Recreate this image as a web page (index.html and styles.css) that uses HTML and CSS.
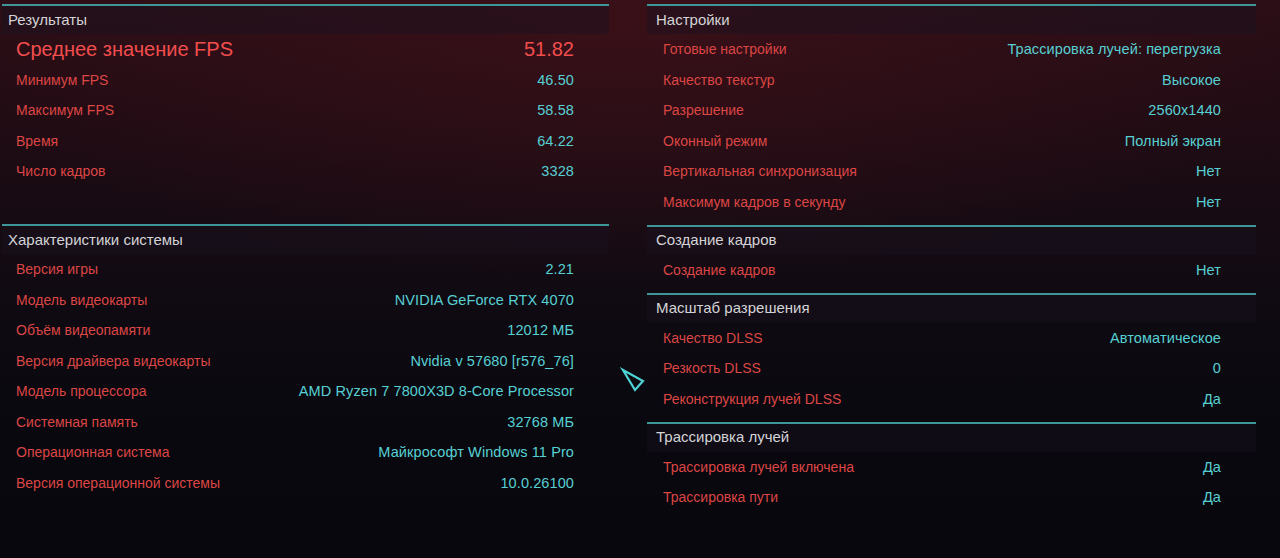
FILE: index.html
```html
<!DOCTYPE html>
<html lang="ru">
<head>
<meta charset="utf-8">
<title>Результаты теста</title>
<link rel="stylesheet" href="styles.css">
</head>
<body>
<main class="screen">
  <div class="col col-left">
    <section class="sec sec-results">
      <div class="sec-head">Результаты</div>
      <div class="row row-big"><span class="lbl">Среднее значение FPS</span><span class="val">51.82</span></div>
      <div class="row"><span class="lbl">Минимум FPS</span><span class="val">46.50</span></div>
      <div class="row"><span class="lbl">Максимум FPS</span><span class="val">58.58</span></div>
      <div class="row"><span class="lbl">Время</span><span class="val">64.22</span></div>
      <div class="row"><span class="lbl">Число кадров</span><span class="val">3328</span></div>
    </section>
    <section class="sec">
      <div class="sec-head">Характеристики системы</div>
      <div class="row"><span class="lbl">Версия игры</span><span class="val">2.21</span></div>
      <div class="row"><span class="lbl">Модель видеокарты</span><span class="val">NVIDIA GeForce RTX 4070</span></div>
      <div class="row"><span class="lbl">Объём видеопамяти</span><span class="val">12012 МБ</span></div>
      <div class="row"><span class="lbl">Версия драйвера видеокарты</span><span class="val">Nvidia v 57680 [r576_76]</span></div>
      <div class="row"><span class="lbl">Модель процессора</span><span class="val">AMD Ryzen 7 7800X3D 8-Core Processor</span></div>
      <div class="row"><span class="lbl">Системная память</span><span class="val">32768 МБ</span></div>
      <div class="row"><span class="lbl">Операционная система</span><span class="val">Майкрософт Windows 11 Pro</span></div>
      <div class="row"><span class="lbl">Версия операционной системы</span><span class="val">10.0.26100</span></div>
    </section>
  </div>

  <div class="col col-right">
    <section class="sec">
      <div class="sec-head">Настройки</div>
      <div class="row"><span class="lbl">Готовые настройки</span><span class="val">Трассировка лучей: перегрузка</span></div>
      <div class="row"><span class="lbl">Качество текстур</span><span class="val">Высокое</span></div>
      <div class="row"><span class="lbl">Разрешение</span><span class="val">2560x1440</span></div>
      <div class="row"><span class="lbl">Оконный режим</span><span class="val">Полный экран</span></div>
      <div class="row"><span class="lbl">Вертикальная синхронизация</span><span class="val">Нет</span></div>
      <div class="row"><span class="lbl">Максимум кадров в секунду</span><span class="val">Нет</span></div>
    </section>
    <section class="sec">
      <div class="sec-head">Создание кадров</div>
      <div class="row"><span class="lbl">Создание кадров</span><span class="val">Нет</span></div>
    </section>
    <section class="sec">
      <div class="sec-head">Масштаб разрешения</div>
      <div class="row"><span class="lbl">Качество DLSS</span><span class="val">Автоматическое</span></div>
      <div class="row"><span class="lbl">Резкость DLSS</span><span class="val">0</span></div>
      <div class="row"><span class="lbl">Реконструкция лучей DLSS</span><span class="val">Да</span></div>
    </section>
    <section class="sec">
      <div class="sec-head">Трассировка лучей</div>
      <div class="row"><span class="lbl">Трассировка лучей включена</span><span class="val">Да</span></div>
      <div class="row"><span class="lbl">Трассировка пути</span><span class="val">Да</span></div>
    </section>
  </div>

  <svg class="cursor" width="28" height="28" viewBox="0 0 28 28" aria-hidden="true">
    <polygon points="3,3 23,14 15,23" fill="none" stroke="#4fd2d4" stroke-width="2.2" stroke-linejoin="miter"/>
  </svg>
</main>
</body>
</html>
```

FILE: styles.css
```css
* { box-sizing: border-box; }

html, body {
  margin: 0;
  padding: 0;
  width: 1280px;
  height: 558px;
  overflow: hidden;
}

body {
  font-family: "Liberation Sans", Arial, sans-serif;
  background:
    radial-gradient(ellipse 700px 260px at 620px 20px, rgba(70, 18, 26, 0.55), rgba(70, 18, 26, 0) 100%),
    linear-gradient(180deg, #2b0e16 0%, #220c14 18%, #170b13 38%, #0e0a12 58%, #09080f 78%, #07070d 100%);
}

.screen {
  position: relative;
  display: flex;
  width: 1280px;
  height: 558px;
  padding-top: 4px;
}

.col-left {
  width: 607px;
  margin-left: 2px;
}

.col-right {
  width: 609px;
  margin-left: 38px;
}

.sec {
  border-top: 2px solid #3f9699;
  padding-bottom: 7.5px;
}

.sec-results {
  padding-bottom: 37.5px;
}

.sec-head {
  height: 28px;
  display: flex;
  align-items: center;
  padding-left: 6px;
  padding-bottom: 2px;
  background: rgba(24, 18, 30, 0.45);
  color: #d4d4d6;
  font-size: 15px;
}

.col-right .sec-head {
  padding-left: 9px;
}

.row {
  height: 30.5px;
  display: flex;
  align-items: center;
  justify-content: space-between;
  padding: 0 35px 0 14px;
  font-size: 14px;
}

.col-right .row {
  padding-left: 16px;
}

.lbl {
  color: #dc4644;
}

.val {
  color: #57d0d3;
  font-size: 14.5px;
  letter-spacing: 0.1px;
}

.row-big {
  font-size: 20px;
}

.row-big .lbl,
.row-big .val {
  color: #f24d4d;
  font-size: 20px;
  letter-spacing: 0;
}

.cursor {
  position: absolute;
  left: 620px;
  top: 367px;
}
```
